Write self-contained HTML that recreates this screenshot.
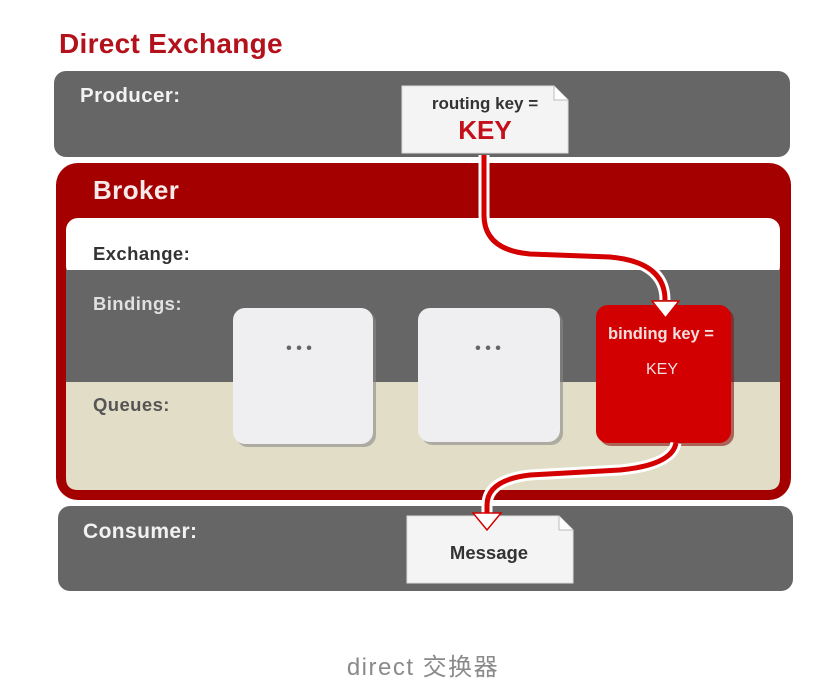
<!DOCTYPE html>
<html><head><meta charset="utf-8"><style>
html,body{margin:0;padding:0;background:#fff;}
svg{display:block}
text{font-family:"Liberation Sans","Noto Sans CJK SC",sans-serif;font-weight:bold}
</style></head><body>
<svg width="838" height="696" viewBox="0 0 838 696" xmlns="http://www.w3.org/2000/svg">
<text x="59" y="53" font-size="28" letter-spacing="0.3" fill="#b3121c">Direct Exchange</text>
<rect x="54" y="71" width="736" height="86" rx="12" fill="#666666"/>
<text x="80" y="102" font-size="20.5" letter-spacing="0.4" fill="#f2f2f2">Producer:</text>
<path d="M402 86 H554 L568 100 V153 H402 Z" fill="#f4f4f4" stroke="#ddd"/>
<path d="M554 86 V100 H568" fill="#fff" stroke="#bbb"/>
<text x="485" y="109" font-size="17" fill="#333" text-anchor="middle">routing key =</text>
<text x="485" y="139" font-size="26" fill="#c4101a" text-anchor="middle">KEY</text>
<rect x="56" y="163" width="735" height="337" rx="22" fill="#a50000"/>
<rect x="66" y="218" width="714" height="60" rx="12" fill="#ffffff"/>
<rect x="66" y="270" width="714" height="112" fill="#666666"/>
<path d="M66 382 H780 V478 Q780 490 768 490 H78 Q66 490 66 478 Z" fill="#e2ddc6"/>
<text x="93" y="199" font-size="26" letter-spacing="0.4" fill="#f5e9e9">Broker</text>
<text x="93" y="260" font-size="18.5" letter-spacing="0.4" fill="#333">Exchange:</text>
<text x="93" y="310" font-size="18.5" letter-spacing="0.4" fill="#e0e0e0">Bindings:</text>
<text x="93" y="411" font-size="18.5" letter-spacing="0.4" fill="#555">Queues:</text>
<rect x="236" y="311" width="140" height="136" rx="12" fill="#888" opacity="0.6"/>
<rect x="233" y="308" width="140" height="136" rx="12" fill="#efeff1"/>
<text x="299" y="353" font-size="16" fill="#666" text-anchor="middle">• • •</text>
<rect x="421" y="311" width="142" height="134" rx="12" fill="#888" opacity="0.6"/>
<rect x="418" y="308" width="142" height="134" rx="12" fill="#efeff1"/>
<text x="488" y="353" font-size="16" fill="#666" text-anchor="middle">• • •</text>
<rect x="599" y="308" width="135" height="138" rx="12" fill="#8a1010" opacity="0.6"/>
<rect x="596" y="305" width="135" height="138" rx="12" fill="#d20000"/>
<text x="661" y="339" font-size="16.5" fill="#f3dede" text-anchor="middle">binding key =</text>
<text x="662" y="374" font-size="16" fill="#f3dede" text-anchor="middle" style="font-weight:normal">KEY</text>
<rect x="58" y="506" width="735" height="85" rx="12" fill="#666666"/>
<text x="83" y="538" font-size="21" letter-spacing="0.4" fill="#f2f2f2">Consumer:</text>
<path d="M407 516 H559 L573 530 V583 H407 Z" fill="#f4f4f4" stroke="#ddd"/>
<path d="M559 516 V530 H573" fill="#fff" stroke="#bbb"/>
<text x="489" y="559" font-size="18.5" fill="#333" text-anchor="middle">Message</text>
<g fill="none" stroke-linecap="butt">
<path d="M484 155 V215 Q484 250 530 254 L610 257 Q665 262 665 300" stroke="#fff" stroke-width="11"/>
<path d="M484 155 V215 Q484 250 530 254 L610 257 Q665 262 665 300" stroke="#d40000" stroke-width="5"/>
<path d="M676 443 Q672 465 620 470 L530 475 Q487 480 487 505 V515" stroke="#fff" stroke-width="11"/>
<path d="M676 443 Q672 465 620 470 L530 475 Q487 480 487 505 V515" stroke="#d40000" stroke-width="5"/>
</g>
<path d="M652 301 H679 L665.5 318 Z" fill="#fff" stroke="#d40000" stroke-width="1.5"/>
<path d="M473 513 H501 L487 530 Z" fill="#fff" stroke="#d40000" stroke-width="1.5"/>
<text x="423" y="675" font-size="24" letter-spacing="1.5" fill="#8a8a8a" text-anchor="middle" style="font-weight:normal">direct 交换器</text>
</svg>
</body></html>
